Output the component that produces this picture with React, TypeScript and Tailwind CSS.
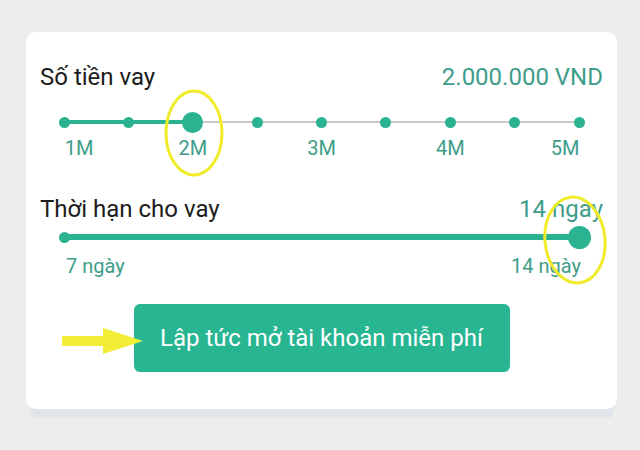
const TEAL = "bg-[#2bb391]";

function AmountSlider() {
  const dots = Array.from({ length: 9 }, (_, i) => i);
  const labels: Record<number, string> = { 0: "1M", 2: "2M", 4: "3M", 6: "4M", 8: "5M" };
  return (
    <div className="px-[24px]">
      <div className="relative h-[24px]">
        <div className="absolute left-0 right-0 top-[11px] h-[2px] bg-[#c9c9c9]" />
        <div className="absolute left-0 w-[25%] top-[10px] h-[4px] bg-[#2bb391]" />
        <div className="relative flex h-full items-center justify-between">
          {dots.map((i) => (
            <div key={i} className="flex w-0 justify-center">
              {i === 2 ? (
                <div className={`h-[21px] w-[21px] shrink-0 rounded-full ${TEAL}`} />
              ) : (
                <div className={`h-[11px] w-[11px] shrink-0 rounded-full ${TEAL}`} />
              )}
            </div>
          ))}
        </div>
      </div>
      <div className="mt-[1px] flex justify-between text-[20px] leading-[26px] text-[#3e9d89]">
        {dots.map((i) => (
          <div key={i} className="flex w-0 justify-center">
            {labels[i] && (
              <span
                className={
                  i === 0 ? "ml-[30px] shrink-0" : i === 8 ? "mr-[28px] shrink-0" : "shrink-0"
                }
              >
                {labels[i]}
              </span>
            )}
          </div>
        ))}
      </div>
    </div>
  );
}

function TermSlider() {
  return (
    <div className="px-[24px]">
      <div className="relative flex h-[24px] items-center justify-between">
        <div className="absolute left-0 right-0 top-[9px] h-[6px] bg-[#2bb391]" />
        <div className="flex w-0 justify-center">
          <div className={`relative h-[11px] w-[11px] shrink-0 rounded-full ${TEAL}`} />
        </div>
        <div className="flex w-0 justify-center">
          <div className={`relative h-[23px] w-[23px] shrink-0 rounded-full ${TEAL}`} />
        </div>
      </div>
      <div className="mt-[4px] flex justify-between text-[20px] leading-[26px] text-[#3e9d89]">
        <span className="ml-[2px]">7 ngày</span>
        <span className="-mr-[2px]">14 ngày</span>
      </div>
    </div>
  );
}

export default function App() {
  return (
    <div
      className="relative h-[450px] w-[640px] overflow-hidden bg-[#ededed] pt-[32px] pl-[26px]"
      style={{ fontFamily: "Roboto, 'Noto Sans', sans-serif" }}
    >
      <div className="w-[591px] rounded-[10px] bg-white px-[14px] pt-[30px] pb-[37px] shadow-[0_13px_3px_-4px_#dfe5ea]">
        <div className="flex items-center justify-between text-[24px] leading-[30px]">
          <span className="text-[#1c1c1c]">Số tiền vay</span>
          <span className="text-[#3e9d89]">2.000.000 VND</span>
        </div>
        <div className="mt-[18px]">
          <AmountSlider />
        </div>
        <div className="mt-[33px] flex items-center justify-between text-[24px] leading-[30px]">
          <span className="text-[#1c1c1c]">Thời hạn cho vay</span>
          <span className="text-[#3e9d89]">14 ngày</span>
        </div>
        <div className="mt-[1px]">
          <TermSlider />
        </div>
        <div className="mt-[25px] flex justify-center">
          <button className="h-[68px] w-[376px] rounded-[6px] bg-[#28b592] text-[24px] text-white">
            Lập tức mở tài khoản miễn phí
          </button>
        </div>
      </div>

      {/* yellow annotations drawn over the screenshot */}
      <svg className="pointer-events-none absolute left-0 top-0" width="640" height="450">
        <ellipse cx="194" cy="133" rx="28" ry="42" fill="none" stroke="#f0ec2c" strokeWidth="3" />
        <ellipse cx="575" cy="240" rx="30" ry="43" fill="none" stroke="#f0ec2c" strokeWidth="3" transform="rotate(-6 575 240)" />
        <path d="M62 336 L103 336 L103 328 L143 341 L103 354 L103 346 L62 346 Z" fill="#f2ee36" />
      </svg>
    </div>
  );
}
